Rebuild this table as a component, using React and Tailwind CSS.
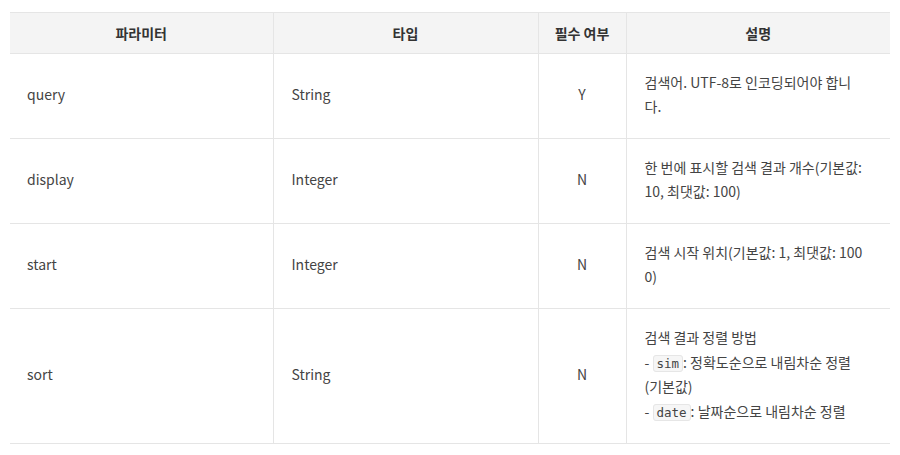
import React from 'react';

const Code = ({ children }) => (
    <code className="rounded-[3px] border border-[#e6e6e6] bg-[#f6f6f6] px-[3px] font-['DejaVu_Sans_Mono',monospace] text-[12.5px] leading-[16px] text-[#444]">
        {children}
    </code>
);

// lines are broken where the source page breaks them
const rows = [
    {
        name: 'query',
        type: 'String',
        required: 'Y',
        lines: ['검색어. UTF-8로 인코딩되어야 합니', '다.'],
    },
    {
        name: 'display',
        type: 'Integer',
        required: 'N',
        lines: ['한 번에 표시할 검색 결과 개수(기본값:', '10, 최댓값: 100)'],
    },
    {
        name: 'start',
        type: 'Integer',
        required: 'N',
        lines: ['검색 시작 위치(기본값: 1, 최댓값: 100', '0)'],
    },
    {
        name: 'sort',
        type: 'String',
        required: 'N',
        lines: [
            '검색 결과 정렬 방법',
            <>-&nbsp;<Code>sim</Code>: 정확도순으로 내림차순 정렬</>,
            '(기본값)',
            <>-&nbsp;<Code>date</Code>: 날짜순으로 내림차순 정렬</>,
        ],
    },
];

const App = () => {
    return (
        <div className="min-h-[455px] bg-white px-[10px] pt-[12px] font-['Noto_Sans_CJK_KR','Noto_Sans',sans-serif] text-[14px] text-[#444]">
            <table className="w-[880px] table-fixed border-collapse">
                <colgroup>
                    <col className="w-[263px]" />
                    <col className="w-[265px]" />
                    <col className="w-[88px]" />
                    <col className="w-[264px]" />
                </colgroup>
                <thead>
                    <tr className="h-[41px] border-y border-[#e5e5e5] bg-[#f4f4f4]">
                        <th className="text-center font-bold text-[#333]">파라미터</th>
                        <th className="border-l border-[#e5e5e5] text-center font-bold text-[#333]">타입</th>
                        <th className="border-l border-[#e5e5e5] text-center font-bold text-[#333]">필수 여부</th>
                        <th className="border-l border-[#e5e5e5] text-center font-bold text-[#333]">설명</th>
                    </tr>
                </thead>
                <tbody>
                    {rows.map((row) => (
                        <tr key={row.name} className="border-b border-[#e5e5e5] align-middle">
                            <td className="pb-[3px] pl-[17px]">{row.name}</td>
                            <td className="border-l border-[#e5e5e5] pb-[3px] pl-[18px]">{row.type}</td>
                            <td className="border-l border-[#e5e5e5] pb-[3px] text-center">{row.required}</td>
                            <td
                                className={`border-l border-[#e5e5e5] pt-[16px] pb-[20px] pl-[18px] pr-[12px] ${
                                    row.lines.length > 2 ? 'leading-[24.5px]' : 'leading-[24px]'
                                }`}
                            >
                                {row.lines.map((line, i) => (
                                    <div key={i} className="whitespace-nowrap">{line}</div>
                                ))}
                            </td>
                        </tr>
                    ))}
                </tbody>
            </table>
        </div>
    );
};

export default App;
